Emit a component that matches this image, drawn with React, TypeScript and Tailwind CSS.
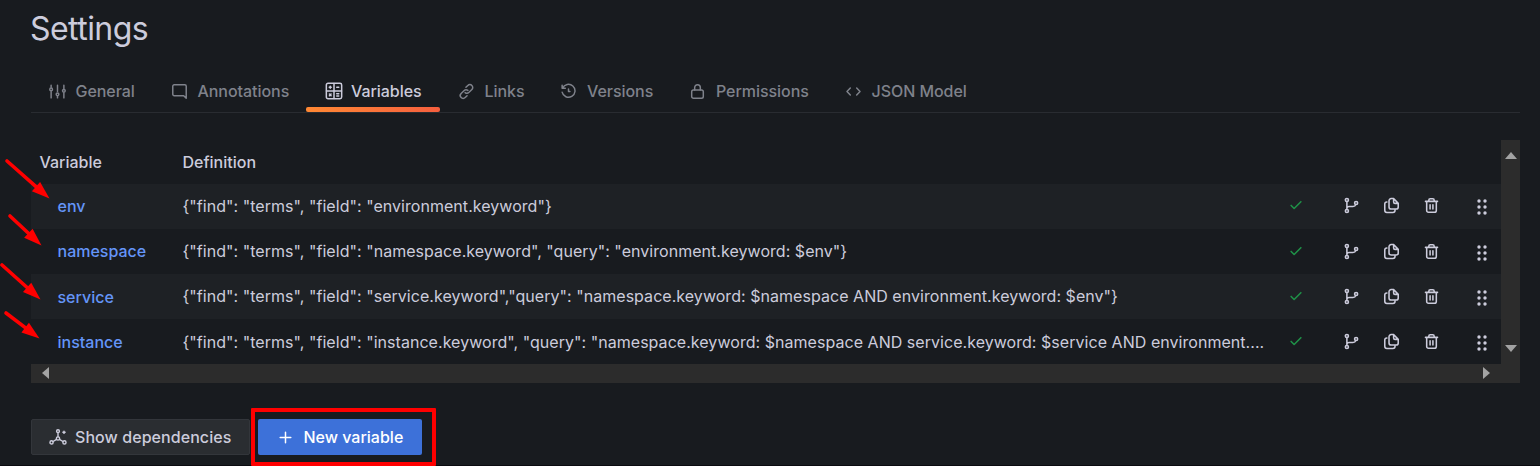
import type { ReactNode } from 'react';

type IconProps = { className?: string; children: ReactNode; width?: number };

function Icon({ className = 'size-[17px]', children, width = 2.1 }: IconProps) {
  return (
    <svg
      viewBox="0 0 24 24"
      className={`shrink-0 ${className}`}
      fill="none"
      stroke="currentColor"
      strokeWidth={width}
      strokeLinecap="round"
      strokeLinejoin="round"
    >
      {children}
    </svg>
  );
}

const Sliders = () => (
  <Icon>
    <path d="M3 3v3M3 12v9M12 3v9M12 18v3M21 3v5M21 14v7" />
    <circle cx="3" cy="9" r="1.9" />
    <circle cx="12" cy="16" r="1.9" />
    <circle cx="21" cy="11" r="1.9" />
  </Icon>
);
const Comment = () => (
  <Icon>
    <path d="M4.500 2.500h15a2 2 0 0 1 2 2v17l-3.600-3.600H4.500a2 2 0 0 1-2-2V4.500a2 2 0 0 1 2-2Z" />
  </Icon>
);
const Calculator = () => (
  <Icon className="size-[20px]" width={1.8}>
    <rect x="2.800" y="2.800" width="18.400" height="18.400" rx="2" />
    <path d="M12 3v18M3 12h18M6.300 7.500h2.400M15.300 7.500h2.400M7.500 6.300v2.400M6.500 15.700l2 2M8.500 15.700l-2 2M15.300 15.200h2.400M15.300 18h2.400" />
  </Icon>
);
const LinkIcon = () => (
  <Icon>
    <path d="M10 13.500a4.400 4.400 0 0 0 5.600-.4l4-4a4 4 0 0 0-5.700-5.700l-2.700 2.700M14 10.500a4.400 4.400 0 0 0-5.600.4l-4 4a4 4 0 0 0 5.700 5.700l2.700-2.700" />
  </Icon>
);
const HistoryIcon = () => (
  <Icon>
    <path d="M3 3v4.500h4.500M3.600 7.200A9.200 9.200 0 1 1 3 13M12 8.500v3.500h2" />
  </Icon>
);
const Lock = () => (
  <Icon>
    <rect x="3.800" y="10" width="16.400" height="11.500" rx="2.500" />
    <path d="M8 10V6.500a4 4 0 0 1 8 0V10" />
  </Icon>
);
const Brackets = () => (
  <Icon>
    <path d="M7.500 7.200 2.800 12l4.700 4.800M16.500 7.200l4.700 4.800-4.700 4.800" />
  </Icon>
);
const Check = () => (
  <Icon className="size-[18px]" width={2.1}>
    <path d="m5.500 12.600 4 4 9-9" />
  </Icon>
);
const Branch = () => (
  <Icon width={2.2}>
    <circle cx="5.500" cy="4.200" r="2.200" />
    <circle cx="5.500" cy="19.800" r="2.200" />
    <circle cx="18.500" cy="8.500" r="2.200" />
    <path d="M5.500 6.500v11M5.500 15.500c.3-1.400 1.300-2 3-2h5.500c2 0 3.500-.8 4-2.700" />
  </Icon>
);
const Copy = () => (
  <Icon width={2.200}>
    <path d="M15 2.200h-3.500a3 3 0 0 0-3 3V14a3 3 0 0 0 3 3h7a3 3 0 0 0 3-3V9L15 2.200ZM15 2.200V7a2 2 0 0 0 2 2h4.500M5.500 7a3 3 0 0 0-3 3v8.800a3 3 0 0 0 3 3h8.500a3 3 0 0 0 3-3" />
  </Icon>
);
const Trash = () => (
  <Icon width={2.200}>
    <path d="M3.500 6.200h17M5.200 6.200V19a2.500 2.500 0 0 0 2.500 2.500h8.600a2.500 2.500 0 0 0 2.500-2.500V6.200M8.200 6V4.500a2 2 0 0 1 2-2h3.600a2 2 0 0 1 2 2V6M10 11v6M14 11v6" />
  </Icon>
);
const Grip = () => (
  <svg viewBox="0 0 12 18" className="h-[18px] w-3 shrink-0" fill="currentColor">
    {[3, 9, 15].map((y) => (
      <g key={y}>
        <circle cx="3" cy={y} r="1.7" />
        <circle cx="9" cy={y} r="1.7" />
      </g>
    ))}
  </svg>
);
const Dependencies = () => (
  <Icon className="size-[18px]" width={1.9}>
    <circle cx="12" cy="4.200" r="1.900" />
    <circle cx="12" cy="14" r="2.200" />
    <circle cx="3.400" cy="19.200" r="2.100" />
    <circle cx="20.600" cy="19.200" r="2.100" />
    <path d="M12 6.300v5.500M10 15.200l-4.500 2.800M14 15.200l4.500 2.800M20 4.200v3M18.500 5.700h3" />
  </Icon>
);
const Plus = () => (
  <Icon>
    <path d="M12 4.500v15M4.500 12h15" />
  </Icon>
);

const tabs = [
  { label: 'General', icon: <Sliders />, width: 'w-[122px]', gap: 'gap-[9.500px]' },
  { label: 'Annotations', icon: <Comment />, width: 'w-[153px]', gap: 'gap-[9.500px]' },
  { label: 'Variables', icon: <Calculator />, width: 'w-[134px]', gap: 'gap-[7px]', active: true },
  { label: 'Links', icon: <LinkIcon />, width: 'w-[102px]', gap: 'gap-[9.500px]' },
  { label: 'Versions', icon: <HistoryIcon />, width: 'w-[129px]', gap: 'gap-[10px]' },
  { label: 'Permissions', icon: <Lock />, width: 'w-[156px]', gap: 'gap-[10px]' },
  { label: 'JSON Model', icon: <Brackets />, width: 'w-[160px]', gap: 'gap-[9.500px]' },
];

const variables = [
  { name: 'env', nameShift: '', textShift: '', actionShift: 'pt-0', definition: '{"find": "terms", "field": "environment.keyword"}' },
  { name: 'namespace', nameShift: '', textShift: '', actionShift: 'pt-[2px]', definition: '{"find": "terms", "field": "namespace.keyword", "query": "environment.keyword: $env"}' },
  { name: 'service', nameShift: 'pt-[2px]', textShift: '', actionShift: 'pt-[2px]', definition: '{"find": "terms", "field": "service.keyword","query": "namespace.keyword: $namespace AND environment.keyword: $env"}' },
  { name: 'instance', nameShift: 'pt-[2px]', textShift: 'pt-[2px]', actionShift: 'pt-[1px]', definition: '{"find": "terms", "field": "instance.keyword", "query": "namespace.keyword: $namespace AND service.keyword: $service AND environment....' },
];

const arrows = [
  [7, 161, 49.5, 198.5],
  [10, 216, 41.5, 245.5],
  [2, 265, 40.5, 299.500],
  [6, 313, 39.500, 338.500],
];

function Arrow({ points: [x1, y1, x2, y2] }: { points: number[] }) {
  const length = Math.hypot(x2 - x1, y2 - y1);
  const angle = (Math.atan2(y2 - y1, x2 - x1) * 180) / Math.PI;
  return (
    <g transform={`translate(${x1} ${y1}) rotate(${angle})`}>
      <path d={`M0 0H${length - 15}`} stroke="#ff0000" strokeWidth="3.600" strokeLinecap="round" />
      <path d={`M${length} 0L${length - 18} -6.200V6.200Z`} fill="#ff0000" />
    </g>
  );
}

export default function App() {
  return (
    <main className="relative flex h-[466px] w-[1540px] flex-col overflow-hidden bg-[#181b1f] pl-[31px] pr-5 font-['Inter',sans-serif] text-[#ccccdc]">
      <h1 className="-ml-px mt-[9px] h-10 text-[32px] leading-10 tracking-[-0.017em]">Settings</h1>

      <nav className="mt-5 flex h-11 shrink-0 border-b border-[#292c31]">
        {tabs.map((tab) => (
          <div
            key={tab.label}
            className={`relative flex shrink-0 items-center pl-[18px] pt-px text-[16px] font-medium tracking-[-0.003em] ${tab.width} ${tab.gap} ${tab.active ? 'text-[#ccccdc]' : 'text-[#7f828b]'}`}
          >
            {tab.icon}
            <span className="whitespace-nowrap">{tab.label}</span>
            {tab.active && (
              <span className="absolute bottom-0 left-0 h-[5px] w-full rounded-[2px] bg-gradient-to-r from-[#ff8833] to-[#f55f3e]" />
            )}
          </div>
        ))}
      </nav>

      <section className="mt-[27px] grid h-[242.5px] w-[1489px] shrink-0 grid-cols-[1470px_19px] grid-rows-[224px_18.5px]">
        <div className="flex flex-col text-[16px]">
          <div className="flex h-11 items-center pl-[8.500px] font-medium">
            <div className="w-[143px]">Variable</div>
            <div>Definition</div>
          </div>
          {variables.map((variable) => (
            <div
              key={variable.name}
              className="flex h-[45px] items-center pb-[2px] odd:bg-[#181b1f] even:bg-[#1e2125]"
            >
              <div className={`w-[151.5px] pl-[26.5px] font-medium text-[#6495f8] ${variable.nameShift}`}>
                {variable.name}
              </div>
              <div className={`w-[1104px] whitespace-nowrap tracking-[0.0026em] ${variable.textShift}`}>
                {variable.definition}
              </div>
              <div className={`flex items-center ${variable.actionShift}`}>
                <div className="flex w-[56px] pb-px text-[#1f9148]">
                  <Check />
                </div>
                <div className="flex gap-[23px]">
                  <Branch />
                  <Copy />
                  <Trash />
                </div>
                <div className="ml-[36px] flex pt-[3px]">
                  <Grip />
                </div>
              </div>
            </div>
          ))}
        </div>
        <div className="flex flex-col items-center justify-between bg-[#2c2c2c] pb-3 pt-3">
          <svg viewBox="0 0 12 7" className="h-[7px] w-3" fill="#a3a3a3"><path d="M0 7 6 0l6 7Z" /></svg>
          <svg viewBox="0 0 12 7" className="h-[7px] w-3" fill="#a3a3a3"><path d="M0 0h12L6 7Z" /></svg>
        </div>
        <div className="flex items-center justify-between bg-[#2c2c2c] pb-px pl-[11px] pr-[11px]">
          <svg viewBox="0 0 7 12" className="h-3 w-[7px]" fill="#a3a3a3"><path d="M7 0v12L0 6Z" /></svg>
          <svg viewBox="0 0 7 12" className="h-3 w-[7px]" fill="#a3a3a3"><path d="M0 0v12l7-6Z" /></svg>
        </div>
        <div className="bg-[#2c2c2c]" />
      </section>

      <div className="mt-[36.5px] flex gap-[8px] text-[16px] font-medium">
        <button className="flex h-9 w-[219px] items-center gap-2 whitespace-nowrap rounded-[2px] border border-[#33363b] bg-[#2a2d31] pl-[17px] tracking-[0.004em]">
          <Dependencies />
          Show dependencies
        </button>
        <button className="flex h-9 w-[164px] items-center gap-[10px] whitespace-nowrap rounded-[2px] bg-[#3d71d9] pl-[18.500px] text-white">
          <Plus />
          New variable
        </button>
      </div>

      <div className="absolute bottom-0 left-0 h-px w-full bg-[#0b0b10]" />
      <div className="absolute left-[251px] top-[408px] h-[58px] w-[185px] rounded-[1px] border-4 border-[#ff0000]" />
      <svg className="pointer-events-none absolute left-0 top-0 h-[466px] w-[60px]">
        {arrows.map((points) => (
          <Arrow key={points[1]} points={points} />
        ))}
      </svg>
    </main>
  );
}
